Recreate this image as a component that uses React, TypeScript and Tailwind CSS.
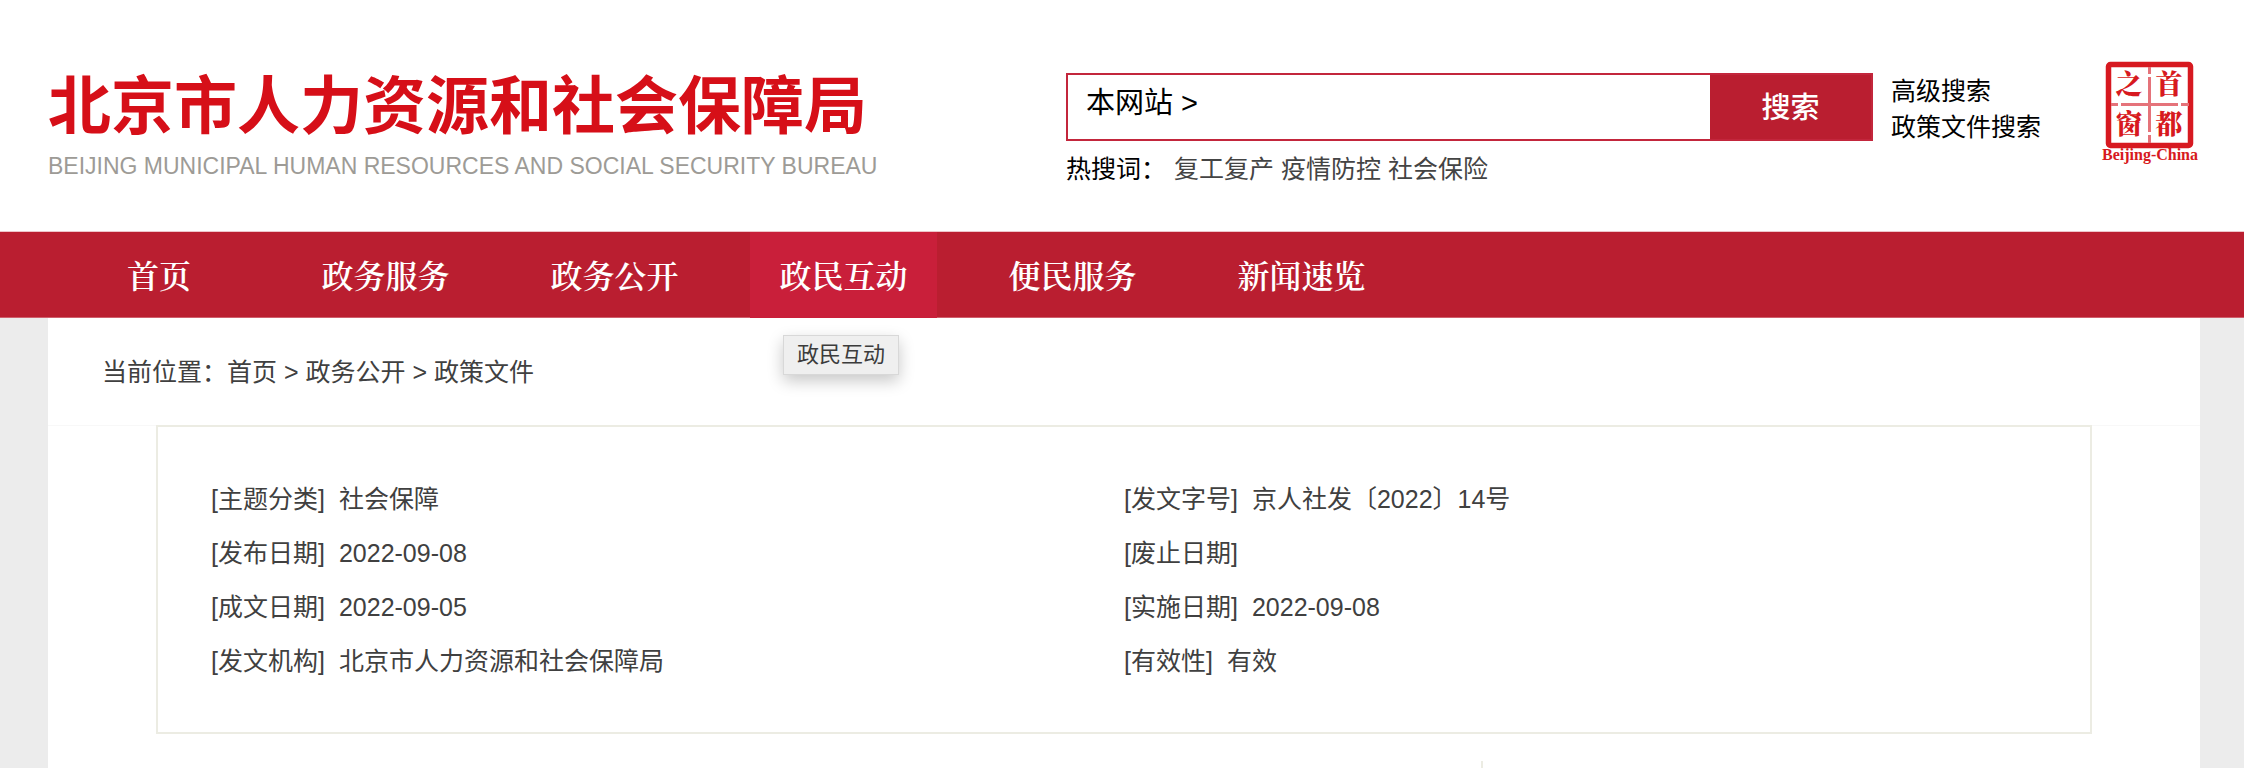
interface NavItem {
  label: string;
  active?: boolean;
}

interface DocField {
  label: string;
  value: string;
}

const navItems: NavItem[] = [
  { label: "首页" },
  { label: "政务服务" },
  { label: "政务公开" },
  { label: "政民互动", active: true },
  { label: "便民服务" },
  { label: "新闻速览" },
];

const hotWords = ["复工复产", "疫情防控", "社会保险"];

const crumbs = ["首页", "政务公开", "政策文件"];

// left / right column pairs, read row by row
const fields: DocField[] = [
  { label: "主题分类", value: "社会保障" },
  { label: "发文字号", value: "京人社发〔2022〕14号" },
  { label: "发布日期", value: "2022-09-08" },
  { label: "废止日期", value: "" },
  { label: "成文日期", value: "2022-09-05" },
  { label: "实施日期", value: "2022-09-08" },
  { label: "发文机构", value: "北京市人力资源和社会保障局" },
  { label: "有效性", value: "有效" },
];

const Seal: React.FC = () => (
  <svg viewBox="0 0 100 106" className="w-[100px] h-[106px] block" role="img" aria-label="首都之窗">
    <rect x="8.5" y="4.5" width="82" height="81" rx="2" fill="none" stroke="#d71920" strokeWidth="5.5" />
    <g stroke="#e5737a" strokeWidth="3">
      <path d="M49.5 7v7M49.5 17v55M49.5 75v8" />
      <path d="M11 44.5h7M21 44.5h57M81 44.5h8" />
    </g>
    <g
      fill="#d71920"
      fontSize="27"
      fontWeight="900"
      textAnchor="middle"
      className="font-['Noto_Serif_CJK_SC','Noto_Sans_CJK_SC',serif]"
    >
      <text x="29" y="34">之</text>
      <text x="69" y="34">首</text>
      <text x="29" y="74">窗</text>
      <text x="69" y="74">都</text>
    </g>
    <text
      x="50"
      y="100"
      fill="#d71920"
      fontSize="16"
      fontWeight="700"
      textAnchor="middle"
      className="font-['Liberation_Serif',serif]"
    >
      Beijing-China
    </text>
  </svg>
);

const Header: React.FC = () => (
  <header className="flex h-[232px] border-b border-[#eec5c9] pl-12 pr-11 pt-[60px]">
    <a href="#home" className="w-[1018px] shrink-0">
      <h1 className="text-[63px] leading-[92px] font-bold text-[#d60f18]">北京市人力资源和社会保障局</h1>
      <p className="text-[23px] leading-[28px] text-[#9d9b96] whitespace-nowrap">
        BEIJING MUNICIPAL HUMAN RESOURCES AND SOCIAL SECURITY BUREAU
      </p>
    </a>

    <div className="flex-1 pt-[13px]">
      <form className="flex h-[68px] border-2 border-[#c3263c]" onSubmit={(e) => e.preventDefault()}>
        <button type="button" className="h-[56px] px-[18px] text-[29px] leading-[56px] text-black">
          本网站 &gt;
        </button>
        <input type="text" aria-label="搜索内容" className="min-w-0 flex-1 text-[29px] outline-none" />
        <button type="submit" className="w-[161px] bg-[#ba1e30] pt-1 text-[29px] font-medium text-white">
          搜索
        </button>
      </form>
      <p className="mt-2 flex gap-[7px] text-[25px] leading-[40px] text-[#444]">
        <span className="w-[101px] whitespace-nowrap text-black">热搜词：</span>
        {hotWords.map((word) => (
          <a key={word} href="#search">
            {word}
          </a>
        ))}
      </p>
    </div>

    <div className="ml-[18px] mr-[59px] flex flex-col pt-[13px] text-[25px] leading-[36px] text-black">
      <a href="#advanced">高级搜索</a>
      <a href="#policy">政策文件搜索</a>
    </div>

    <a href="#capital">
      <Seal />
    </a>
  </header>
);

const Nav: React.FC = () => (
  <nav className="border-b border-[#cf5f6c] bg-[#ba1e30]">
    <ul className="flex gap-[42px] pl-[68px]">
      {navItems.map((item) => (
        <li key={item.label} className="relative w-[187px] first:w-[182px]">
          <a
            href="#nav"
            className={`block text-center text-[32px] leading-[84px] font-semibold text-white font-['Noto_Serif_CJK_SC','Noto_Sans_CJK_SC',serif] ${
              item.active ? "-mb-px h-[86px] bg-[#c91f3a]" : "h-[85px]"
            }`}
          >
            {item.label}
          </a>
          {item.active && (
            <span
              role="tooltip"
              className="absolute left-[33px] top-[103px] border border-[#d8d8d8] bg-[#efefef] px-[13px] text-[22px] leading-[38px] whitespace-nowrap text-[#3c3c3c] shadow-[0_6px_16px_rgba(0,0,0,0.22)]"
            >
              {item.label}
            </span>
          )}
        </li>
      ))}
    </ul>
  </nav>
);

const App: React.FC = () => {
  return (
    <div className="flex min-h-screen flex-col bg-[#ececec] text-[#404040] font-['Liberation_Sans','Noto_Sans_CJK_SC',sans-serif]">
      <div className="bg-white">
        <Header />
      </div>
      <Nav />

      <main className="ml-12 mr-11 flex flex-1 flex-col bg-white">
        <div className="h-[108px] border-b border-[#f8f8f8] pl-[54px] text-[25px] leading-[108px]">
          当前位置：
          {crumbs.map((crumb, i) => (
            <span key={crumb}>
              {i > 0 && " > "}
              <a href="#crumb">{crumb}</a>
            </span>
          ))}
        </div>

        {/* Document info */}
        <dl className="mx-[108px] -mt-px grid grid-cols-2 border-2 border-[#ecece3] px-[53px] pt-[45px] pb-[44px] text-[25px] leading-[54px]">
          {fields.map((field) => (
            <div key={field.label} className="flex gap-[14px]">
              <dt>[{field.label}]</dt>
              <dd>{field.value}</dd>
            </div>
          ))}
        </dl>

        {/* Article column and sidebar divider */}
        <div className="mt-[27px] flex flex-1">
          <div className="w-[1435px] border-r-2 border-[#ecece3]" />
        </div>
      </main>
    </div>
  );
};

export default App;
